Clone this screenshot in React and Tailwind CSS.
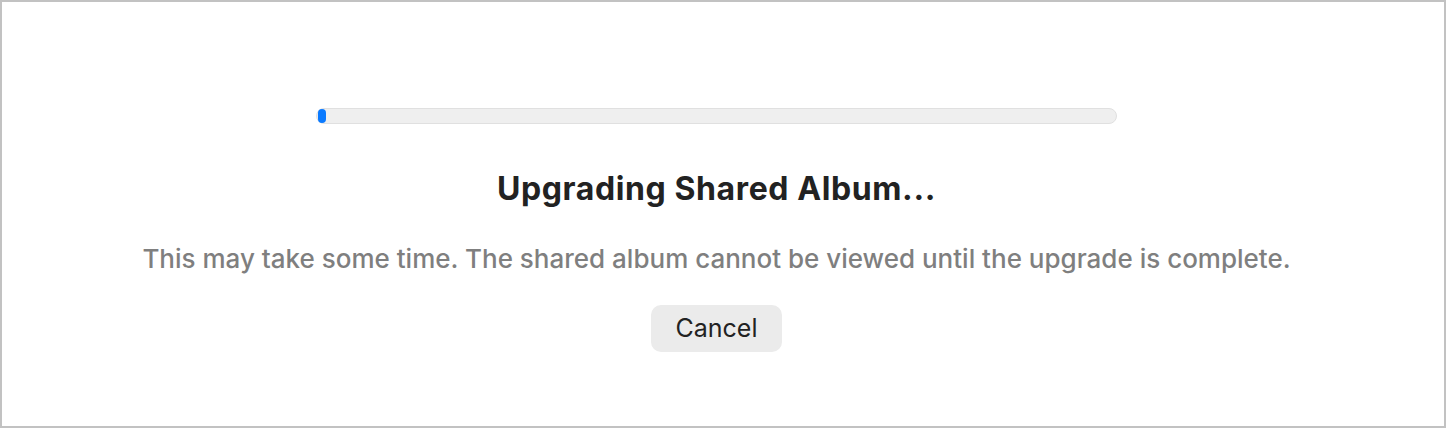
export default function App() {
  return (
    <div className="w-[1446px] h-[428px] bg-white border-2 border-[#c2c2c2] flex flex-col items-center pr-[13px]" style={{ fontFamily: 'Inter, "Noto Sans", sans-serif' }}>
      <div className="mt-[106px] w-[801px] h-[16px] rounded-full bg-[#efefef] border border-[#e0e0e0] flex items-center pl-[1px]">
        <div className="w-[8px] h-[14px] rounded-full bg-[#0a7aff]" />
      </div>
      <div className="mt-[47px] text-[32px] leading-[36px] font-bold text-[#222222] tracking-[0.6px]">Upgrading Shared Album...</div>
      <div className="mt-[36px] text-[26px] leading-[32px] font-medium text-[#7f7f7f]">This may take some time. The shared album cannot be viewed until the upgrade is complete.</div>
      <button className="mt-[30px] w-[131px] h-[47px] rounded-[10px] bg-[#ebebeb] text-[25px] text-[#222222]">Cancel</button>
    </div>
  );
}
